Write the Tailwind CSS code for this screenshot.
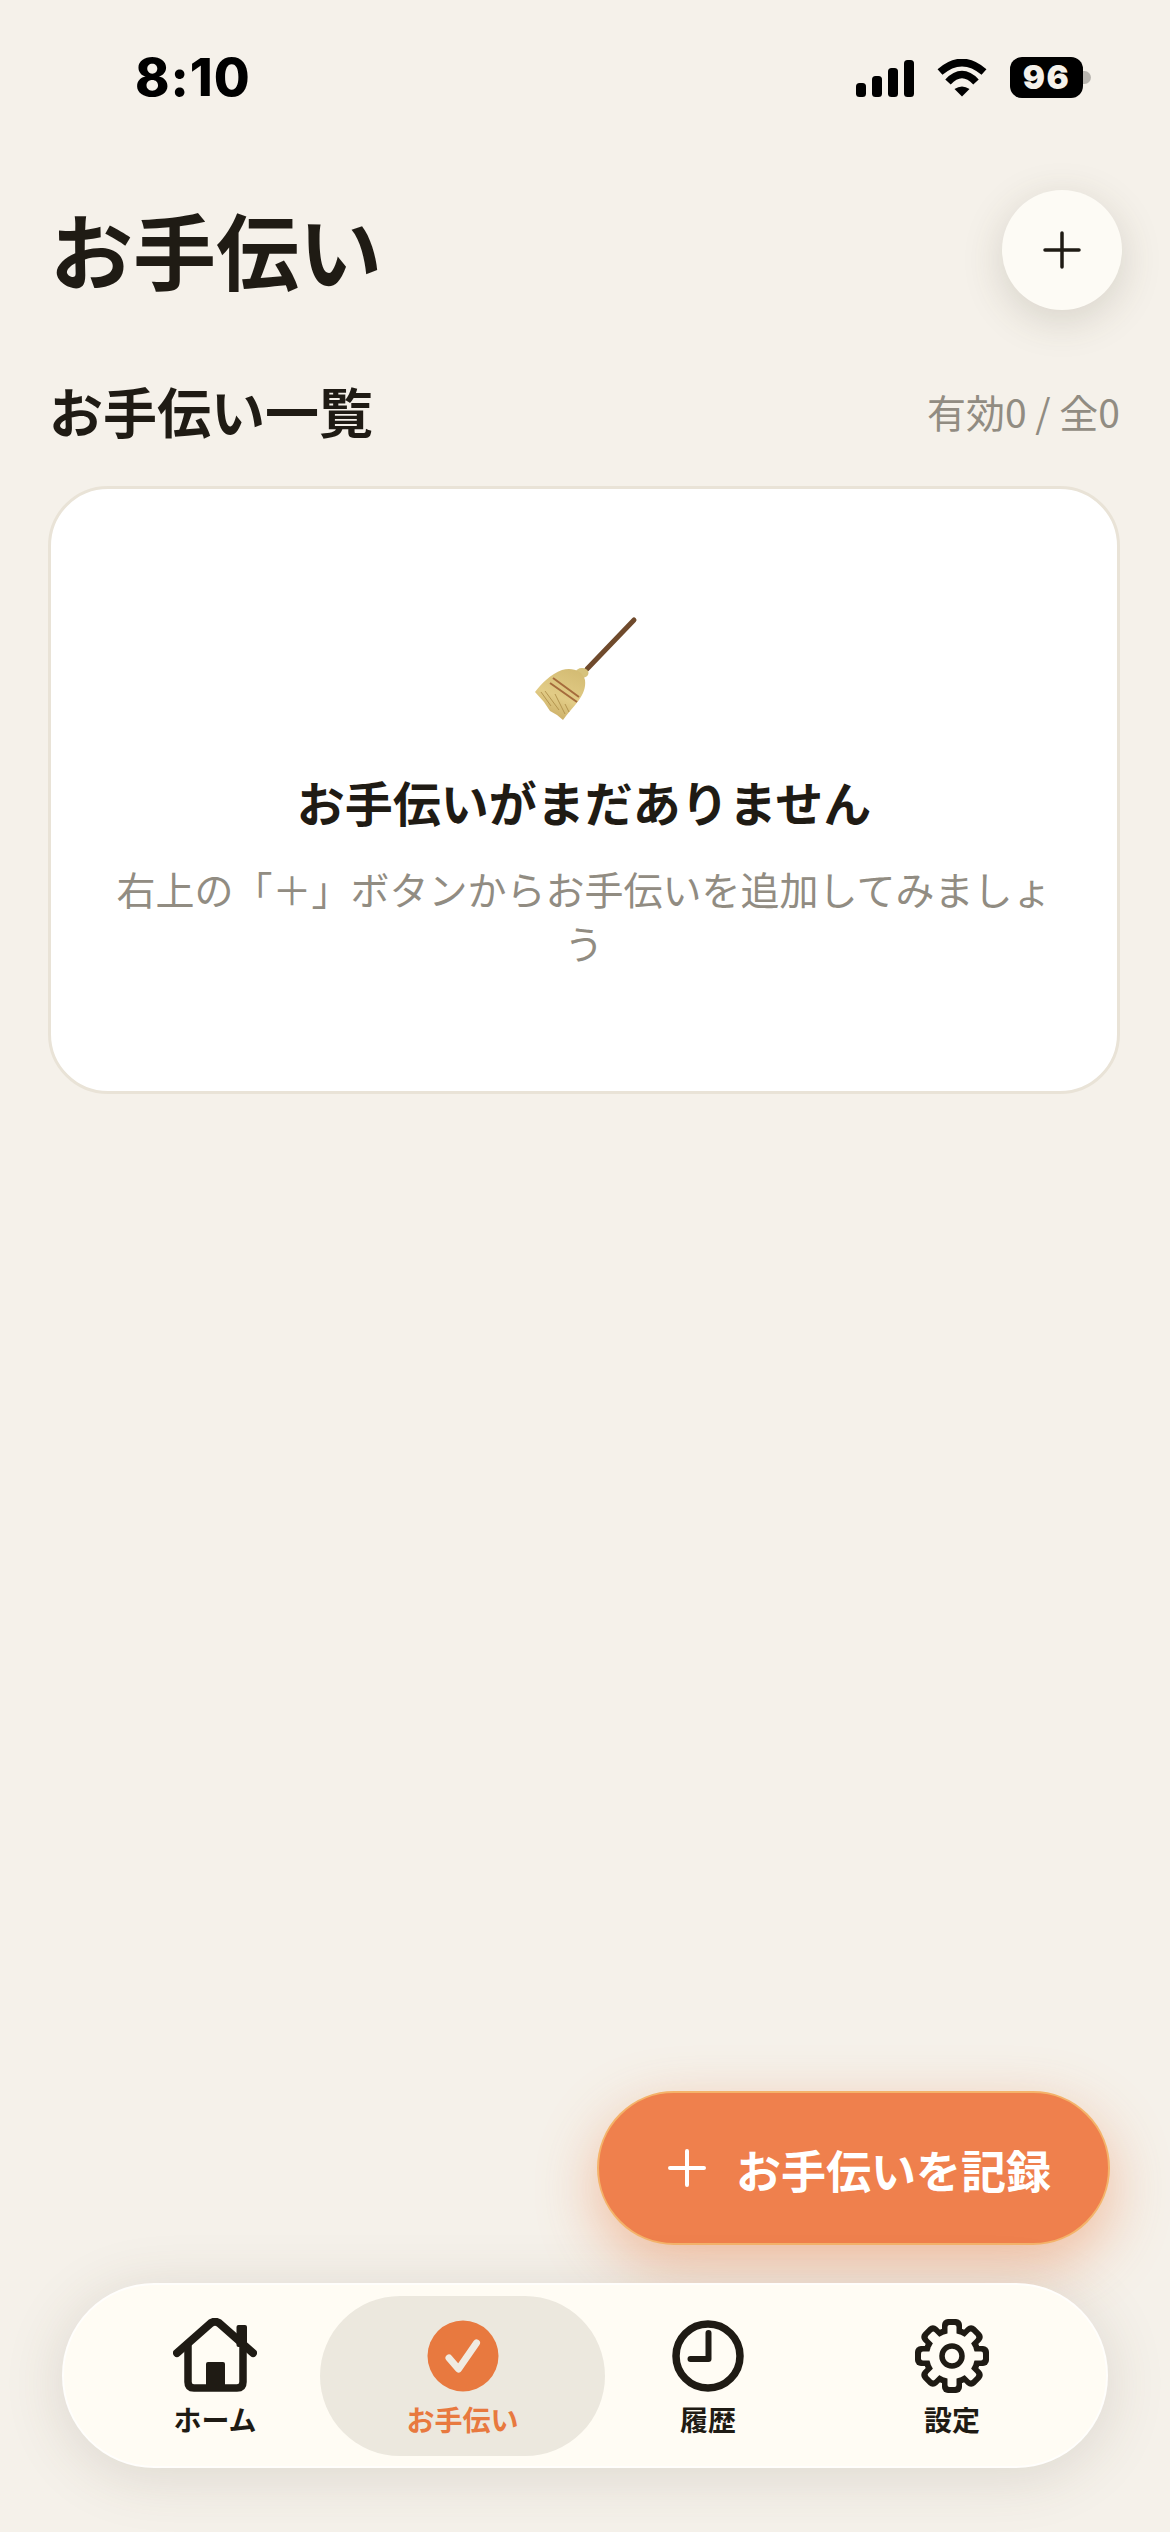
<!DOCTYPE html>
<html lang="ja">
<head>
<meta charset="utf-8">
<script src="https://cdn.jsdelivr.net/npm/@tailwindcss/browser@4"></script>
</head>
<body class="m-0">
<div class="relative flex h-[2532px] w-[1170px] flex-col overflow-hidden bg-[#f5f1ea] font-['Noto_Sans_CJK_JP','Noto_Sans',sans-serif] text-[#1f1b14]">

  <!-- status bar -->
  <div class="flex h-[172px] shrink-0 items-start justify-between pl-[135px] pr-[79px] pt-[46px]">
    <span class="font-['Inter',sans-serif] text-[52px] leading-[64px] font-extrabold tracking-[1px] text-black">8:10</span>
    <div class="flex items-center gap-[23px] pt-[11px]">
      <svg class="h-[38px] w-[58px]" viewBox="0 0 58 38" fill="#000">
        <rect x="0" y="24" width="10" height="14" rx="3.5"/><rect x="16" y="17" width="10" height="21" rx="3.5"/><rect x="32" y="9" width="10" height="29" rx="3.5"/><rect x="48" y="1" width="10" height="37" rx="3.5"/>
      </svg>
      <svg class="h-[38px] w-[50px]" viewBox="0 0 50 38" fill="none" stroke="#000" stroke-width="7.5">
        <path d="M3 13 Q25 -6 47 13"/>
        <path d="M11 23 Q25 8 39 23"/>
        <path d="M17.5 30 Q25 25 32.5 30 L25 37.5 Z" fill="#000" stroke="none"/>
      </svg>
      <div class="flex items-center">
        <div class="flex h-[41px] w-[73px] items-center justify-center rounded-[12px] bg-black font-['Inter',sans-serif] text-[33px] leading-none font-black tracking-[1.5px] text-[#f5f1ea]">96</div>
        <div class="h-[13px] w-[8px] rounded-r-full bg-[#b9b6b0]"></div>
      </div>
    </div>
  </div>

  <!-- header -->
  <div class="flex h-[150px] shrink-0 items-center justify-between pl-[50px] pr-[48px] pt-[6px]">
    <h1 class="mb-[4px] text-[83px] leading-[110px] font-bold text-[#1f1b14]">お手伝い</h1>
    <button class="flex h-[120px] w-[120px] items-center justify-center rounded-full bg-[#fdfbf5] shadow-[0_10px_40px_rgba(80,70,50,0.18)]">
      <svg class="h-[38px] w-[38px]" viewBox="0 0 38 38" stroke="#1f1b14" stroke-width="3.5" stroke-linecap="round"><path d="M19 2V36M2 19H36"/></svg>
    </button>
  </div>

  <!-- section title -->
  <div class="mt-[53px] flex shrink-0 items-center justify-between pl-[49px] pr-[50px]">
    <h2 class="text-[54px] leading-[72px] font-bold text-[#1f1b14]">お手伝い一覧</h2>
    <span class="text-[39px] leading-[72px] font-normal text-[#918c82]">有効0 / 全0</span>
  </div>

  <!-- empty card -->
  <div class="ml-[48px] mt-[39px] flex h-[608px] w-[1072px] shrink-0 flex-col items-center rounded-[60px] border-[3px] border-[#e9e3d7] bg-white pt-[101px]">
    <svg class="h-[140px] w-[170px]" viewBox="0 0 170 140">
      <defs><linearGradient id="st" x1="0.7" y1="0" x2="0.3" y2="1"><stop offset="0" stop-color="#d4bc74"/><stop offset="0.55" stop-color="#e2cc86"/><stop offset="1" stop-color="#c9ab63"/></linearGradient></defs>
      <path d="M135 30 L88 79" stroke="#6f4a2c" stroke-width="5" stroke-linecap="round"/>
      <ellipse cx="83" cy="83" rx="6.5" ry="5" fill="#d6c27c"/>
      <path d="M36 102 C42 94 52 84 63 80 C72 77 84 80 86 90 C87 98 84 104 80 110 C74 118 68 124 64 130 L58 125 L51 121 L45 112 Z" fill="url(#st)"/>
      <path d="M54 88 L80 107 M51 93 L78 112" stroke="#a56b3c" stroke-width="2"/>
      <path d="M46 101 L60 120 M42 102 L52 116 M56 104 L66 124 M66 114 L70 122" stroke="#b4954f" stroke-width="1" fill="none"/>
    </svg>
    <p class="mt-[39px] text-[48px] leading-[64px] font-bold text-[#1f1b14]">お手伝いがまだありません</p>
    <p class="mt-[28px] w-[960px] text-center text-[39px] leading-[54px] font-normal text-[#918c82]">右上の「＋」ボタンからお手伝いを追加してみましょう</p>
  </div>

  <!-- floating action button -->
  <button class="absolute left-[597px] top-[2091px] flex h-[154px] w-[513px] items-center gap-[30px] rounded-full border-[2px] border-[#f4b36a] bg-[#ef804d] pl-[69px] shadow-[0_20px_60px_rgba(232,122,64,0.45)]">
    <svg class="h-[38px] w-[38px]" viewBox="0 0 38 38" stroke="#fff" stroke-width="4" stroke-linecap="round"><path d="M19 2V36M2 19H36"/></svg>
    <span class="mt-[4px] text-[45px] leading-[60px] font-semibold text-white">お手伝いを記録</span>
  </button>

  <!-- tab bar -->
  <nav class="relative mb-[64px] ml-[62px] mt-auto flex h-[185px] w-[1046px] shrink-0 items-center rounded-[92px] border-[2px] border-white/70 bg-[#fffcf4] pl-[46px] shadow-[0_8px_60px_rgba(80,70,50,0.15)]">
    <div class="flex h-[160px] w-[210px] flex-col items-center pt-[22px]">
      <svg class="h-[76px] w-[84px]" viewBox="0 0 84 76" fill="none" stroke="#1f1b14" stroke-width="8" stroke-linecap="round" stroke-linejoin="round">
        <path d="M4 35 L38 5 Q42 2.5 46 5 L80 35"/>
        <path d="M15 28 V64 Q15 70 21 70 H64 Q70 70 70 64 V28" stroke-width="7.5"/>
        <rect x="63.5" y="7" width="10.5" height="22" rx="2" fill="#1f1b14" stroke="none"/>
        <rect x="33" y="44" width="19" height="26" rx="2" fill="#1f1b14" stroke="none"/>
      </svg>
      <span class="mt-[6px] text-[28px] leading-[38px] font-bold text-[#1f1b14]">ホーム</span>
    </div>
    <div class="flex h-[160px] w-[285px] flex-col items-center rounded-[80px] bg-[#ece8de] pt-[22px]">
      <svg class="h-[76px] w-[72px]" viewBox="0 0 72 76">
        <circle cx="36" cy="38" r="35.5" fill="#e8793f"/>
        <path d="M22 40 L31.5 51 L49.5 25" fill="none" stroke="#f0ebe1" stroke-width="7" stroke-linecap="round" stroke-linejoin="round"/>
      </svg>
      <span class="mt-[6px] text-[28px] leading-[38px] font-bold text-[#e8793f]">お手伝い</span>
    </div>
    <div class="flex h-[160px] w-[206px] flex-col items-center pt-[22px]">
      <svg class="h-[76px] w-[72px]" viewBox="0 0 72 76" fill="none" stroke="#1f1b14" stroke-linecap="round" stroke-linejoin="round">
        <circle cx="36" cy="38" r="32" stroke-width="7.5"/>
        <path d="M36.5 15 V41 H18.5" stroke-width="6"/>
      </svg>
      <span class="mt-[6px] text-[28px] leading-[38px] font-bold text-[#1f1b14]">履歴</span>
    </div>
    <div class="flex h-[160px] w-[282px] flex-col items-center pt-[22px]">
      <svg class="h-[76px] w-[76px]" viewBox="0 0 76 76">
        <g fill="#1f1b14">
          <circle cx="38" cy="38" r="29"/>
          <rect x="28" y="1" width="20" height="22" rx="6"/>
          <rect x="28" y="1" width="20" height="22" rx="6" transform="rotate(45 38 38)"/>
          <rect x="28" y="1" width="20" height="22" rx="6" transform="rotate(90 38 38)"/>
          <rect x="28" y="1" width="20" height="22" rx="6" transform="rotate(135 38 38)"/>
          <rect x="28" y="1" width="20" height="22" rx="6" transform="rotate(180 38 38)"/>
          <rect x="28" y="1" width="20" height="22" rx="6" transform="rotate(225 38 38)"/>
          <rect x="28" y="1" width="20" height="22" rx="6" transform="rotate(270 38 38)"/>
          <rect x="28" y="1" width="20" height="22" rx="6" transform="rotate(315 38 38)"/>
        </g>
        <g fill="#fffcf4">
          <circle cx="38" cy="38" r="23"/>
          <rect x="33.5" y="7" width="9" height="22" rx="2"/>
          <rect x="33.5" y="7" width="9" height="22" rx="2" transform="rotate(45 38 38)"/>
          <rect x="33.5" y="7" width="9" height="22" rx="2" transform="rotate(90 38 38)"/>
          <rect x="33.5" y="7" width="9" height="22" rx="2" transform="rotate(135 38 38)"/>
          <rect x="33.5" y="7" width="9" height="22" rx="2" transform="rotate(180 38 38)"/>
          <rect x="33.5" y="7" width="9" height="22" rx="2" transform="rotate(225 38 38)"/>
          <rect x="33.5" y="7" width="9" height="22" rx="2" transform="rotate(270 38 38)"/>
          <rect x="33.5" y="7" width="9" height="22" rx="2" transform="rotate(315 38 38)"/>
        </g>
        <circle cx="38" cy="38" r="10" fill="none" stroke="#1f1b14" stroke-width="5.5"/>
      </svg>
      <span class="mt-[6px] text-[28px] leading-[38px] font-bold text-[#1f1b14]">設定</span>
    </div>
  </nav>
</div>
</body>
</html>
